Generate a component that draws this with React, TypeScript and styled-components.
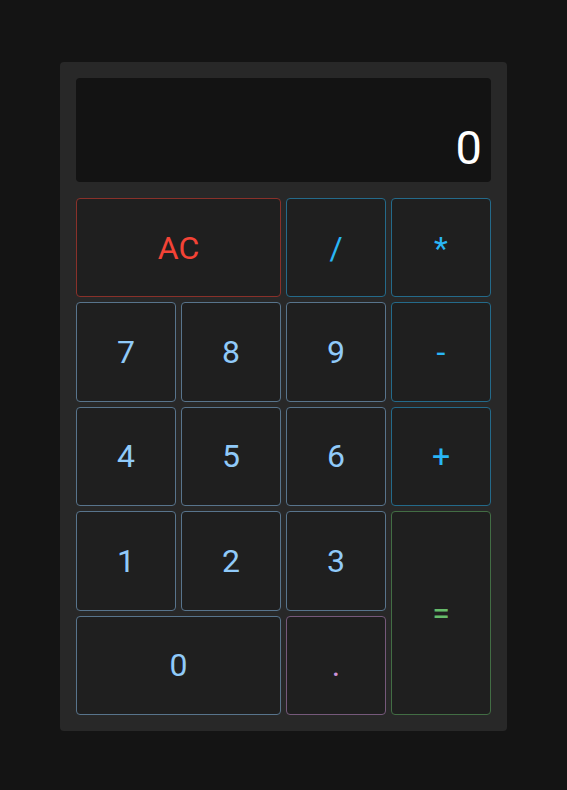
import React from "react";
import styled, { createGlobalStyle } from "styled-components";

const Global = createGlobalStyle`
  html, body { margin: 0; padding: 0; background: #141414; }
  body { font-family: Roboto, "Noto Sans", sans-serif; }
`;

const Page = styled.div`
  display: flex;
  justify-content: center;
  padding-top: 62px;
  padding-right: 0px;
  min-height: 790px;
  box-sizing: border-box;
`;

const Card = styled.div`
  width: 447px;
  box-sizing: border-box;
  padding: 16px;
  background: #282828;
  border-radius: 4px;
  display: flex;
  flex-direction: column;
  gap: 16px;
  align-self: flex-start;
`;

const Display = styled.div`
  height: 104px;
  box-sizing: border-box;
  background: #131313;
  border-radius: 4px;
  display: flex;
  align-items: flex-end;
  justify-content: flex-end;
  padding: 0 9px 11px 0;
  color: #ffffff;
  font-size: 47px;
  line-height: 1;
`;

const Grid = styled.div`
  display: grid;
  grid-template-columns: repeat(4, 100px);
  grid-auto-rows: 99.4px;
  gap: 5px;
`;

type Kind = "num" | "op" | "clear" | "eq" | "dot";

const palette: Record<Kind, { fg: string; border: string }> = {
  num: { fg: "#90caf9", border: "#58748c" },
  op: { fg: "#29b6f6", border: "#246a8a" },
  clear: { fg: "#f44336", border: "#89312a" },
  eq: { fg: "#66bb6a", border: "#426d44" },
  dot: { fg: "#ce93d8", border: "#76597b" },
};

const Key = styled.button<{ $kind: Kind; $col?: number; $row?: number }>`
  grid-column: span ${(p) => p.$col ?? 1};
  grid-row: span ${(p) => p.$row ?? 1};
  background: #1f1f1f;
  border: 1px solid ${(p) => palette[p.$kind].border};
  border-radius: 4px;
  color: ${(p) => palette[p.$kind].fg};
  font-family: Roboto, "Noto Sans", sans-serif;
  font-size: 32px;
  display: flex;
  align-items: center;
  justify-content: center;
  padding: 0;
  cursor: pointer;
`;

export default function App() {
  return (
    <>
      <Global />
      <Page>
        <Card>
          <Display>0</Display>
          <Grid>
            <Key $kind="clear" $col={2}>AC</Key>
            <Key $kind="op">/</Key>
            <Key $kind="op">*</Key>
            <Key $kind="num">7</Key>
            <Key $kind="num">8</Key>
            <Key $kind="num">9</Key>
            <Key $kind="op">-</Key>
            <Key $kind="num">4</Key>
            <Key $kind="num">5</Key>
            <Key $kind="num">6</Key>
            <Key $kind="op">+</Key>
            <Key $kind="num">1</Key>
            <Key $kind="num">2</Key>
            <Key $kind="num">3</Key>
            <Key $kind="eq" $row={2}>=</Key>
            <Key $kind="num" $col={2}>0</Key>
            <Key $kind="dot">.</Key>
          </Grid>
        </Card>
      </Page>
    </>
  );
}
